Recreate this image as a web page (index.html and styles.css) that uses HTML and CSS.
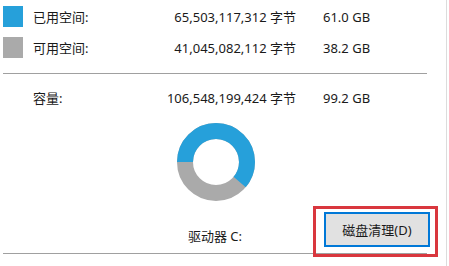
FILE: index.html
```html
<!DOCTYPE html>
<html lang="zh-CN">
<head>
    <meta charset="UTF-8">
    <title>磁盘属性</title>
    <link rel="stylesheet" href="styles.css">
</head>
<body>
    <div class="pagina">
        <div class="painel">
            <div class="linha">
                <span class="amostra usado"></span>
                <span class="rotulo">已用空间:</span>
                <span class="bytes">65,503,117,312 字节</span>
                <span class="gb">61.0 GB</span>
            </div>
            <div class="linha">
                <span class="amostra livre"></span>
                <span class="rotulo">可用空间:</span>
                <span class="bytes">41,045,082,112 字节</span>
                <span class="gb">38.2 GB</span>
            </div>
            <div class="separador"></div>
            <div class="linha capacidade">
                <span></span>
                <span class="rotulo">容量:</span>
                <span class="bytes">106,548,199,424 字节</span>
                <span class="gb">99.2 GB</span>
            </div>
            <div class="grafico">
                <svg width="80" height="80" viewBox="0 0 80 80">
                    <circle cx="40" cy="40" r="31" fill="none" stroke="#aaaaaa" stroke-width="16"/>
                    <circle cx="40" cy="40" r="31" fill="none" stroke="#26a0da" stroke-width="16"
                            stroke-dasharray="119 200" transform="rotate(180 40 40)"/>
                </svg>
            </div>
            <div class="rodape">
                <span></span>
                <span class="unidade">驱动器 C:</span>
                <div class="acao">
                    <button class="limpeza">磁盘清理(D)</button>
                    <span class="destaque"></span>
                </div>
            </div>
        </div>
    </div>
</body>
</html>
```

FILE: styles.css
```css
body {
    margin: 0;
    background-color: #fff;
    font-family: "Noto Sans", "Noto Sans CJK SC", sans-serif;
    font-size: 13px;
    color: #1a1a1a;
}
.pagina {
    width: 446px;
    height: 266px;
    border-right: 1px solid #dcdcdc;
    overflow: hidden;
}
.painel {
    margin-left: 3px;
    width: 428px;
    padding-top: 1px;
}
.linha {
    display: grid;
    grid-template-columns: 20px 100px 173px auto;
    height: 31px;
    align-items: center;
}
.rotulo {
    padding-left: 10px;
}
.bytes {
    text-align: right;
}
.gb {
    padding-left: 27px;
}
.amostra {
    width: 20px;
    height: 21px;
}
.usado {
    background-color: #26a0da;
}
.livre {
    background-color: #aaaaaa;
}
.separador {
    margin-top: 10px;
    width: 424px;
    border-top: 1px solid #a0a0a0;
}
.capacidade {
    margin-top: 8px;
}
.grafico {
    display: flex;
    justify-content: center;
    margin-top: 9px;
    margin-left: -3px;
}
.grafico svg {
    display: block;
}
.rodape {
    display: grid;
    grid-template-columns: 1fr auto 1fr;
    align-items: end;
    padding-top: 10px;
    padding-bottom: 6px;
    width: 424px;
    border-bottom: 1px solid #a0a0a0;
}
.unidade {
    margin-bottom: 2px;
}
.acao {
    position: relative;
    justify-self: end;
    margin-right: -3px;
}
.limpeza {
    display: block;
    width: 106px;
    height: 35px;
    font-family: inherit;
    font-size: 13px;
    color: #1a1a1a;
    background-color: #e1e1e1;
    border: 2px solid #0078d7;
}
.destaque {
    position: absolute;
    left: -11px;
    right: -8px;
    top: -6px;
    bottom: -10px;
    border: 3px solid #d9373e;
}
```
